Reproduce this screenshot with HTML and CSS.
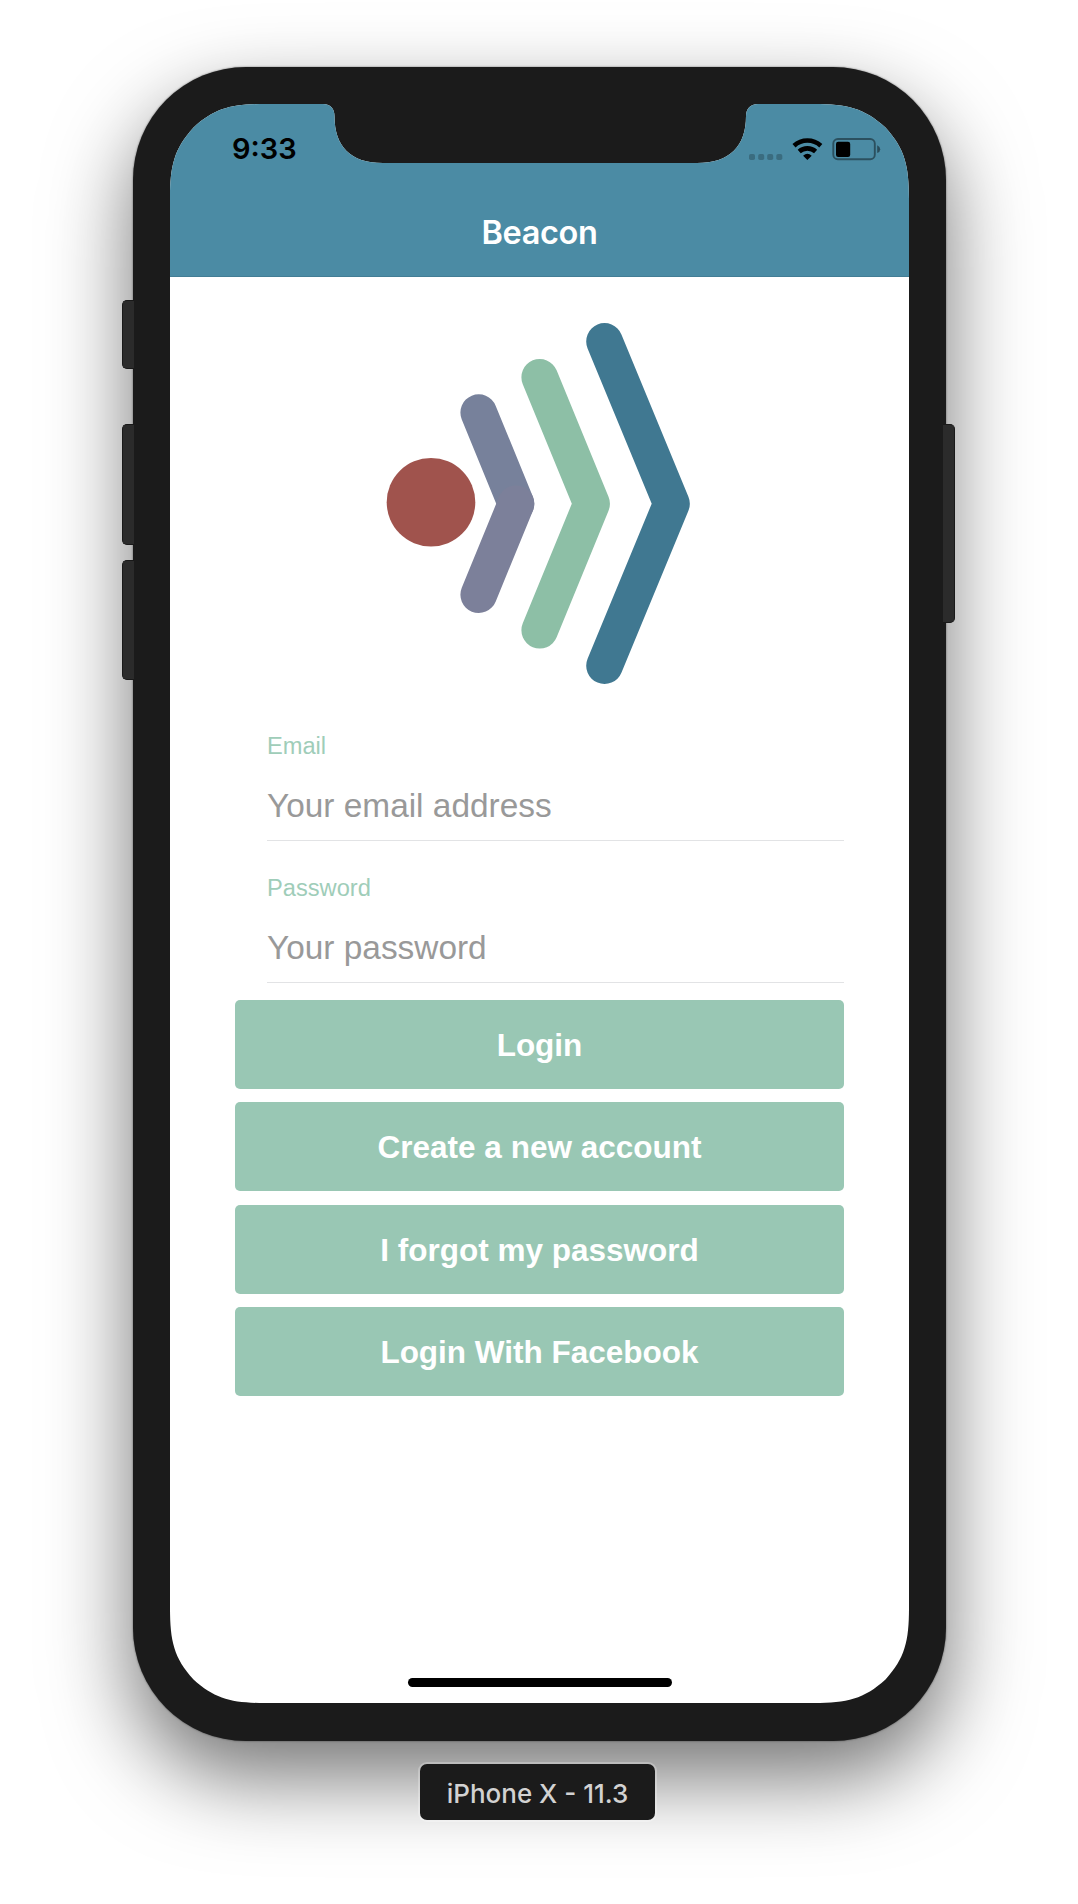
FILE: index.html
```html
<!DOCTYPE html>
<html lang="en">
<head>
<meta charset="utf-8">
<title>Beacon</title>
<link rel="stylesheet" href="styles.css">
</head>
<body>
<main class="stage">
  <div class="phone">
    <span class="key key-mute"></span>
    <span class="key key-up"></span>
    <span class="key key-down"></span>
    <span class="key key-power"></span>
    <div class="screen">
      <header class="header">
        <div class="status">
          <span class="time">9:33</span>
          <svg class="status-icons" width="134" height="24" viewBox="0 0 134 24">
            <g fill="#000" opacity=".22">
              <rect x="0" y="16" width="6" height="6" rx="1.8"/>
              <rect x="9.2" y="16" width="6" height="6" rx="1.8"/>
              <rect x="18.2" y="16" width="6" height="6" rx="1.8"/>
              <rect x="27.3" y="16" width="6" height="6" rx="1.8"/>
            </g>
            <g fill="none" stroke="#000" stroke-width="4.6">
              <path d="M45 7.700A20 20 0 0 1 71.800 7.700"/>
              <path d="M50.200 13.500A12.300 12.300 0 0 1 66.600 13.500"/>
            </g>
            <path d="M54.100 17.700Q58.400 13.900 62.700 17.700L58.400 22Z"/>
            <rect x="84.300" y="1" width="41.500" height="20.200" rx="4.500" fill="none" stroke="#000" stroke-opacity=".42" stroke-width="1.900"/>
            <rect x="87" y="3.800" width="14.200" height="15.100" rx="2.200"/>
            <path d="M128.200 7.300Q131.200 8.600 131.200 11.200T128.200 15.100Z" opacity=".45"/>
          </svg>
        </div>
        <h1 class="title">Beacon</h1>
      </header>
      <section class="content">
        <svg class="logo" width="304" height="364" viewBox="386 322 304 364">
          <circle cx="431" cy="502.200" r="44.300" fill="#a0534d"/>
          <g fill="none" stroke-width="36.600" stroke-linecap="round">
            <path d="M478.700 412.600L516 503.700" stroke="#77819b"/>
            <path d="M516 503.700L478.700 594.700" stroke="#7c809a"/>
            <path d="M539.700 377.300L591.600 503.700L539.700 630.300" stroke="#8dbfa6" stroke-linejoin="round"/>
            <path d="M604.500 341.400L671.500 503.700L604.500 665.700" stroke="#407891" stroke-linejoin="round"/>
          </g>
        </svg>
        <div class="form">
          <div class="field">
            <label class="label">Email</label>
            <div class="input">Your email address</div>
          </div>
          <div class="field">
            <label class="label">Password</label>
            <div class="input">Your password</div>
          </div>
          <div class="actions">
            <button class="button">Login</button>
            <button class="button">Create a new account</button>
            <button class="button">I forgot my password</button>
            <button class="button">Login With Facebook</button>
          </div>
        </div>
      </section>
      <div class="home"></div>
    </div>
  </div>
  <div class="device-tag">iPhone X - 11.3</div>
</main>
</body>
</html>
```
FILE: styles.css
```css
* { box-sizing: border-box; }

body {
  margin: 0;
  background: #fff;
  font-family: "Liberation Sans", Arial, sans-serif;
}

.stage {
  display: flex;
  flex-direction: column;
  align-items: center;
  height: 1904px;
  padding: 67px 0 0 1px;
  overflow: hidden;
}

.phone {
  position: relative;
  flex: none;
  width: 813px;
  height: 1674px;
  padding: 37px;
  border-radius: 113px;
  background: #1b1b1b;
  box-shadow: 0 0 2px rgba(0, 0, 0, .55), 0 36px 84px rgba(0, 0, 0, .55);
}

.key {
  position: absolute;
  left: -11px;
  width: 12px;
  border: 1.5px solid #191919;
  border-right-width: 0;
  border-radius: 5px 0 0 5px;
  background: #2b2b2b;
}

.key-mute { top: 233px; height: 69px; }
.key-up { top: 357px; height: 121px; }
.key-down { top: 493px; height: 120px; }
.key-power {
  top: 357px;
  left: auto;
  right: -9px;
  height: 199px;
  border-width: 1.5px 1.5px 1.5px 0;
  border-radius: 0 5px 5px 0;
}

.screen {
  display: flex;
  flex-direction: column;
  width: 739px;
  height: 1599px;
  background: #fff;
  clip-path: path("M0 95C0 62 4 45 23.5 23.5C45 4 62 0 95 0H153C161 0 164.5 5 164.5 12C164.5 42 180 59 213 59H527C560 59 576 42 576 12C576 5 580 0 588 0H644C677 0 694 4 715.5 23.5C735 45 739 62 739 95V1504C739 1537 735 1554 715.5 1575.5C694 1595 677 1599 644 1599H95C62 1599 45 1595 23.5 1575.5C4 1554 0 1537 0 1504Z");
}

.header {
  display: flex;
  flex-direction: column;
  flex: none;
  height: 173px;
  border-bottom: 1px solid #437d95;
  background: #4b8ba4;
}

.status {
  display: flex;
  justify-content: space-between;
  height: 87px;
  padding: 34px 26px 0 62px;
}

.time {
  font: 600 29px/22px Inter, sans-serif;
  color: #000;
}

.title {
  margin: 0;
  text-align: center;
  font: 600 32.5px/86px Inter, sans-serif;
  letter-spacing: -.4px;
  color: #fff;
}

.content {
  display: flex;
  flex-direction: column;
  flex: 1;
  padding: 45px 65px 0;
}

.logo { margin-left: 151px; }

.form {
  display: flex;
  flex-direction: column;
  margin-top: 31px;
}

.field {
  height: 142px;
  margin-left: 32px;
  padding-top: 14px;
}

.label {
  display: block;
  font-size: 23.65px;
  line-height: 30px;
  color: #9fcdb9;
}

.input {
  height: 80px;
  border-bottom: 1.5px solid #e2e3e5;
  font-size: 33.4px;
  line-height: 90px;
  color: #999;
}

.actions {
  display: grid;
  gap: 13.4px;
  margin-top: -1px;
}

.button {
  height: 89px;
  padding: 0;
  border: 0;
  border-radius: 5px;
  background: #99c7b4;
  font: bold 31.5px/91px "Liberation Sans", Arial, sans-serif;
  color: #fff;
}

.home {
  flex: none;
  align-self: center;
  width: 264px;
  height: 9px;
  margin-bottom: 16px;
  border-radius: 5px;
  background: #000;
}

.device-tag {
  z-index: 1;
  flex: none;
  width: 235px;
  height: 56px;
  margin: 23px 4px 0 0;
  border-radius: 7px;
  background: #1b1b1b;
  box-shadow: 0 0 0 2px rgba(255, 255, 255, .25);
  text-align: center;
  font: 500 26px/59px Inter, sans-serif;
  color: #d2d2d2;
}
```
